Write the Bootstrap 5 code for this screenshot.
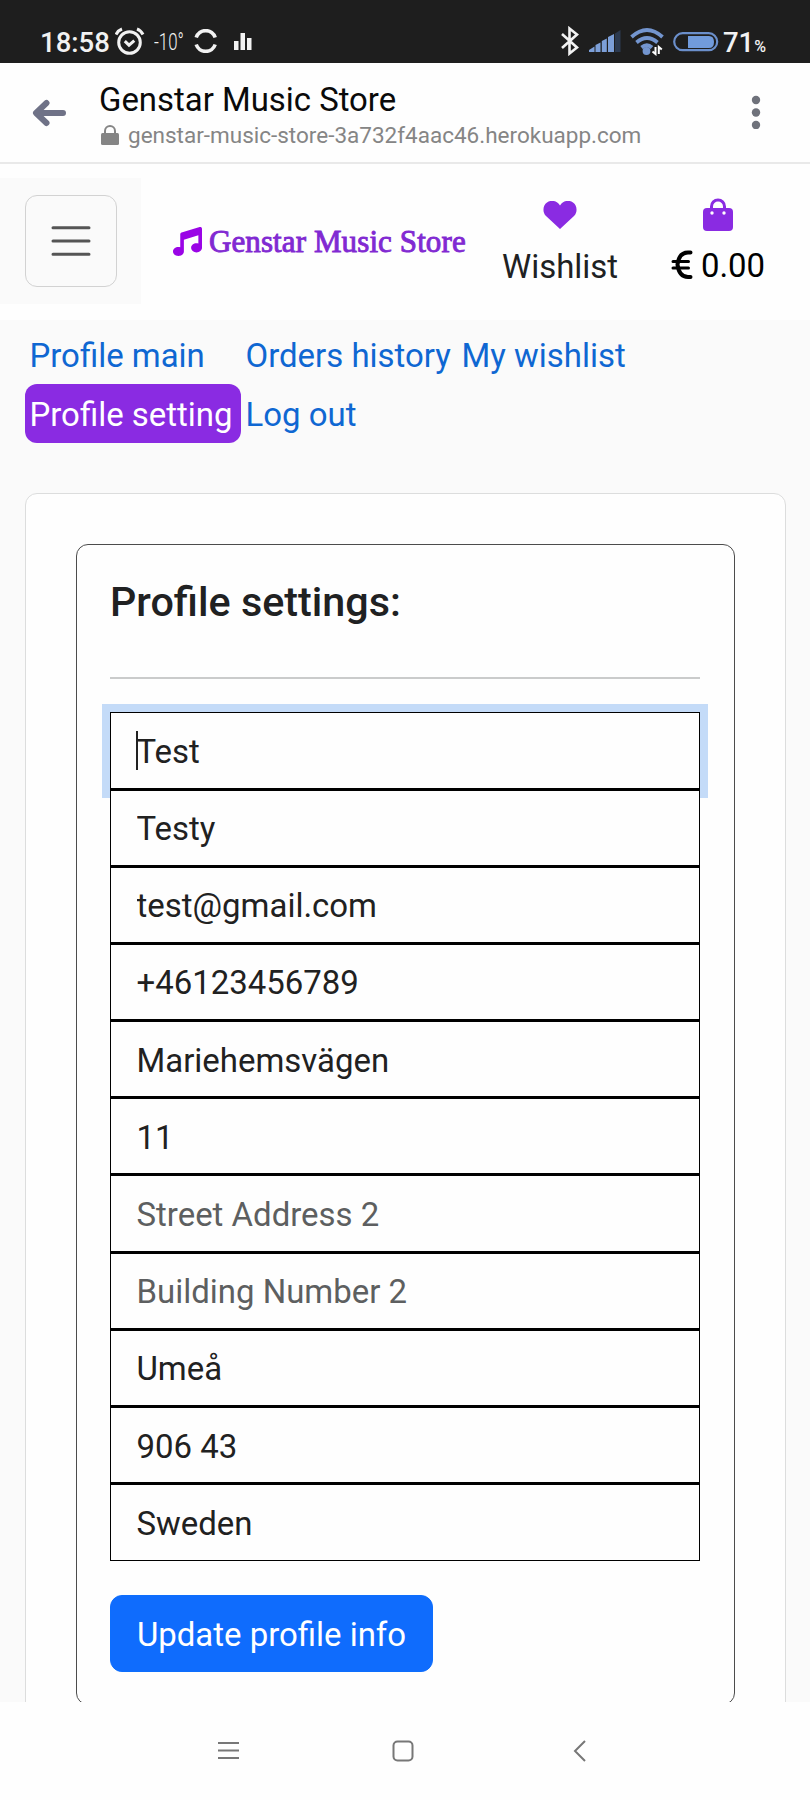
<!DOCTYPE html>
<html lang="en">
<head>
<meta charset="utf-8">
<meta name="viewport" content="width=device-width, initial-scale=1">
<title>Genstar Music Store</title>
<link rel="stylesheet" href="https://cdn.jsdelivr.net/npm/bootstrap@5.3.0/dist/css/bootstrap.min.css">
<style>
body{font-family:Roboto,sans-serif;font-size:32.95px;line-height:1.5;color:#202122;background:#fefefe;height:1800px;overflow:hidden}
svg{display:block;flex:none}
.status-bar{height:63px;background:#1e1e1e;color:#f2f2f2;padding:21px 44px 0 40px}
.status-bar .clock{font-size:27.5px;line-height:43px;font-weight:500;width:75px;white-space:nowrap}
.status-bar .temp{font-size:24px;line-height:42px;font-weight:300;width:28px;white-space:nowrap}
.status-bar .temp span{display:inline-block;transform:scaleX(.7);transform-origin:0 50%}
.status-bar .batt{font-size:27.5px;line-height:43px;font-weight:500}
.status-bar .pct{font-size:16px;font-weight:500}
.url-bar{height:101px;border-bottom:2px solid #e9e9e9;padding:0 47px 0 32px}
.url-bar .titles{margin-left:33px;line-height:1}
.url-bar .page-title{font-size:32.9px;color:#0a0a0a;line-height:38px;margin-top:18px}
.url-bar .address{font-size:22.5px;color:#858585;line-height:28px;margin-top:2px}
.shop-head{height:156px}
.burger-box{width:141px;height:126px;background:#fafafa;margin-top:14px;padding:17px 0 0 25px}
.burger{width:92px;height:92px;border:1px solid #d2d2d2;border-radius:12px;background:transparent;padding:0}
.brand-name{font-family:"Liberation Serif",serif;font-size:31px;line-height:40px;letter-spacing:.1px;margin-top:-1px;color:#8129d2;-webkit-text-stroke:.9px #8129d2;white-space:nowrap}
.shop-main{height:1382px;background:#fafafa;padding:0 24px 0 25px;overflow:hidden}
.profile-nav{display:grid;grid-template-columns:216px 216px auto;grid-auto-rows:59.5px;column-gap:0;justify-content:start;padding-top:4.5px}
.profile-nav .nav-link{padding:1px 5px 0 4.5px;line-height:59px;height:59px;white-space:nowrap;color:#0f67d2}
.profile-nav .nav-link.active{background:#8a2be2;color:#fff;border-radius:12px}
.outer-card{margin-top:49px;border:1px solid #dcdddd;border-radius:12px;background:#fefefe;padding:50px;height:1300px}
.inner-card{border:1px solid #4c4c4c;border-radius:12px;background:#fefefe;height:1161px;padding:33px 34px 0 33px}
.inner-card h5{font-size:41.3px;font-weight:500;line-height:49px;margin:0}
.inner-card hr{margin:50px 0 33px;border-top:2px solid #a6a8a9;opacity:.6}
.field{height:77.2px;border:1px solid #000;border-radius:0;padding:2px 26px 0 25.5px;font-size:32.95px;line-height:49px;color:#212121;background:#fefefe}
.field:not(:last-child),.first-wrap .field{border-bottom-width:2px}
.field:last-child{height:76.6px}
.field::placeholder{color:#5d5f60;opacity:1}
.first-wrap .field{height:78px;box-shadow:0 0 0 8px #c4dbf8}
.first-wrap + .field{position:relative}
.caret{position:absolute;left:26px;top:19px;width:2px;height:39px;background:#222}
.fields{margin-bottom:34px}
.btn-update{font-size:32.95px;line-height:49px;padding:14px 0 12px;width:323px;border-radius:12px;height:77px;background:#0f6cfd;white-space:nowrap}
.sys-nav{height:98px;background:#fefefe;padding:0 224px 0 218px}
</style>
</head>
<body>
<div class="status-bar d-flex align-items-start">
  <div class="clock">18:58</div>
  <svg width="30" height="30" viewBox="0 0 30 30" fill="none" stroke="#f2f2f2" stroke-width="3" style="margin:6px 9px 0 0"><circle cx="14.500" cy="15.500" r="10.800"/><path d="M9.800 14.200l4.200 4 5.300-4.500"/><path d="M1 7.500q2-4 6-5.500M28 7.500q-2-4-6-5.500"/></svg>
  <div class="temp"><span>-10°</span></div>
  <svg width="24" height="24" viewBox="0 0 24 24" fill="none" stroke="#f2f2f2" stroke-width="3.600" style="margin:8px 0 0 12px"><path d="M2.200 8.500a10 10 0 0 1 19 0M2.200 15.500a10 10 0 0 0 19 0"/></svg>
  <svg width="18" height="18" viewBox="0 0 18 18" fill="#f2f2f2" style="margin:12px 0 0 16px"><path d="M0 8h4.500v9H0zM6.500 0h4.500v17H6.500zM13 5h4.500v12H13z"/></svg>
  <div class="ms-auto d-flex align-items-start">
    <svg width="18" height="30" viewBox="0 0 18 30" fill="none" stroke="#f2f2f2" stroke-width="2.600" style="margin:5px 10px 0 0"><path d="M1 8l15 13.500-7.500 6V2.500L16 8.500 1 22"/></svg>
    <svg width="32" height="24" viewBox="0 0 32 24" fill="#7c9fd8" style="margin:8px 9px 0 0"><path d="M0 23v-2l5.500-3.500V23zM6.500 23v-7l5-2.500V23zM12.800 23V12l5-2.500V23zM19 23V8l6-3v18z"/><path fill="#2c3a50" d="M26 23V4.500L31.500 1v22z"/></svg>
    <svg width="34" height="28" viewBox="0 0 34 28" fill="none" stroke="#7395cf" stroke-width="3.800" style="margin:7px 9px 0 0"><path d="M1.500 9q15.500-14 31 0M6.500 14.500q10.500-9 21 0M11.500 19.500q5.500-4.500 10.500 0"/><circle cx="16.500" cy="23" r="2" fill="#7395cf"/><path d="M25.500 19v7l-3-2.500M28.800 26v-7l3 2.500" stroke="#fff" stroke-width="2"/></svg>
    <svg width="46" height="20" viewBox="0 0 46 20" fill="none" style="margin:11px 4px 0 0"><rect x="1.200" y="1.200" width="43" height="17" rx="8.500" stroke="#6b8fcb" stroke-width="2.200"/><path d="M15 4h21q5 0 5 6t-5 6H15z" fill="#719bdc"/></svg>
    <div class="batt">71<span class="pct">%</span></div>
  </div>
</div>

<div class="url-bar d-flex align-items-start">
  <svg width="34" height="28" viewBox="0 0 34 28" fill="none" stroke="#6f7287" stroke-width="6" stroke-linecap="round" stroke-linejoin="round" style="margin-top:36px"><path d="M14.500 4L4 14l10.500 10M5 14h26"/></svg>
  <div class="titles">
    <div class="page-title">Genstar Music Store</div>
    <div class="address d-flex align-items-center"><svg width="20" height="22" viewBox="0 0 20 22" style="margin:0 7px 0 2px"><rect x="0" y="9" width="18" height="12" rx="1.500" fill="#858585"/><path d="M4 10V7a5 5 0 0 1 10 0v3" fill="none" stroke="#858585" stroke-width="2"/></svg>genstar-music-store-3a732f4aac46.herokuapp.com</div>
  </div>
  <svg class="ms-auto" width="14" height="34" viewBox="0 0 14 34" fill="#6f727b" style="margin-top:32px"><circle cx="7" cy="5" r="4.200"/><circle cx="7" cy="17.500" r="4.200"/><circle cx="7" cy="30" r="4.200"/></svg>
</div>

<header class="shop-head d-flex align-items-start">
  <div class="burger-box">
    <button class="burger d-flex align-items-center justify-content-center" type="button" aria-label="Menu"><svg width="40" height="30" viewBox="0 0 40 30" stroke="#555" stroke-width="3" stroke-linecap="round"><path d="M2 1.800h36M2 15h36M2 28.200h36"/></svg></button>
  </div>
  <a class="d-flex align-items-start text-decoration-none" href="#" style="margin:59px 0 0 32px;width:293px">
    <svg width="29" height="29" viewBox="0 0 512 512" fill="#9a04e6" style="margin:4px 7px 0 0"><path d="M499 6c8 6 13 16 13 26v336c0 44-43 80-96 80s-96-36-96-80 43-80 96-80c11 0 22 2 32 5V147l-256 77v208c0 44-43 80-96 80S0 476 0 432s43-80 96-80c11 0 22 2 32 5V128c0-14 9-27 23-31L471 1c10-3 20-1 28 5z"/></svg>
    <span class="brand-name">Genstar Music Store</span>
  </a>
  <div class="d-flex flex-column align-items-center" style="width:130px;margin:36px 0 0 29px">
    <svg width="34" height="29" viewBox="0 0 34 29" fill="#8a2be2" style="margin-top:1px"><path d="M17 28L3 15C-1 11 0 4 4 1.500 8-1.500 14-.500 17 4.500 20-.500 26-1.500 30 1.500 34 4 35 11 31 15z"/></svg>
    <span style="line-height:49px;margin-top:12px">Wishlist</span>
  </div>
  <div class="d-flex flex-column align-items-center text-black" style="width:110px;margin:34px 0 0 38px">
    <svg width="30" height="33" viewBox="0 0 30 33"><path d="M8.500 12V8.500a6.500 6.500 0 0 1 13 0V12" fill="none" stroke="#8a2be2" stroke-width="3"/><rect y="10" width="30" height="23" rx="4" fill="#8a2be2"/><circle cx="9" cy="15" r="1.700" fill="#fff"/><circle cx="21" cy="15" r="1.700" fill="#fff"/></svg>
    <span class="d-flex align-items-center" style="line-height:49px;margin-top:10px"><svg width="22" height="30" viewBox="0 0 22 30" fill="none" stroke="#000" stroke-width="4" stroke-linecap="round" style="margin:0 8px 2px 0"><path d="M19.500 2.500H17Q8 2.500 6.500 14.500 8 27 17 27h2.500"/><path d="M2 11.500h15.500M2 18h15.500" stroke-width="3"/></svg>0.00</span>
  </div>
</header>

<main class="shop-main">
  <nav class="profile-nav">
    <a class="nav-link" href="#">Profile main</a>
    <a class="nav-link" href="#">Orders history</a>
    <a class="nav-link" href="#">My wishlist</a>
    <a class="nav-link active" href="#">Profile setting</a>
    <a class="nav-link" href="#">Log out</a>
  </nav>
  <section class="outer-card">
    <div class="inner-card">
      <h5>Profile settings:</h5>
      <hr>
      <form>
        <div class="fields">
          <div class="first-wrap position-relative"><input class="form-control field" type="text" value="Test" aria-label="First name"><span class="caret"></span></div>
          <input class="form-control field" type="text" value="Testy" aria-label="Last name">
          <input class="form-control field" type="text" value="test@gmail.com" aria-label="Email">
          <input class="form-control field" type="text" value="+46123456789" aria-label="Phone">
          <input class="form-control field" type="text" value="Mariehemsvägen" aria-label="Street">
          <input class="form-control field" type="text" value="11" aria-label="Building">
          <input class="form-control field" type="text" placeholder="Street Address 2">
          <input class="form-control field" type="text" placeholder="Building Number 2">
          <input class="form-control field" type="text" value="Umeå" aria-label="City">
          <input class="form-control field" type="text" value="906 43" aria-label="Post code">
          <input class="form-control field" type="text" value="Sweden" aria-label="Country">
        </div>
        <button class="btn btn-primary btn-update" type="button">Update profile info</button>
      </form>
    </div>
  </section>
</main>

<footer class="sys-nav d-flex align-items-center">
  <svg width="21" height="20" viewBox="0 0 21 20" stroke="#777" stroke-width="2"><path d="M0 2h21M0 9.500h21M0 17h21"/></svg>
  <svg width="22" height="22" viewBox="0 0 22 22" fill="none" stroke="#777" stroke-width="2" style="margin-left:153px"><rect x="1.500" y="1.500" width="19" height="19" rx="4"/></svg>
  <svg class="ms-auto" width="13" height="22" viewBox="0 0 13 22" fill="none" stroke="#777" stroke-width="2"><path d="M12 1L2 11l10 10"/></svg>
</footer>
<script src="https://cdn.jsdelivr.net/npm/bootstrap@5.3.0/dist/js/bootstrap.bundle.min.js"></script>
</body>
</html>
